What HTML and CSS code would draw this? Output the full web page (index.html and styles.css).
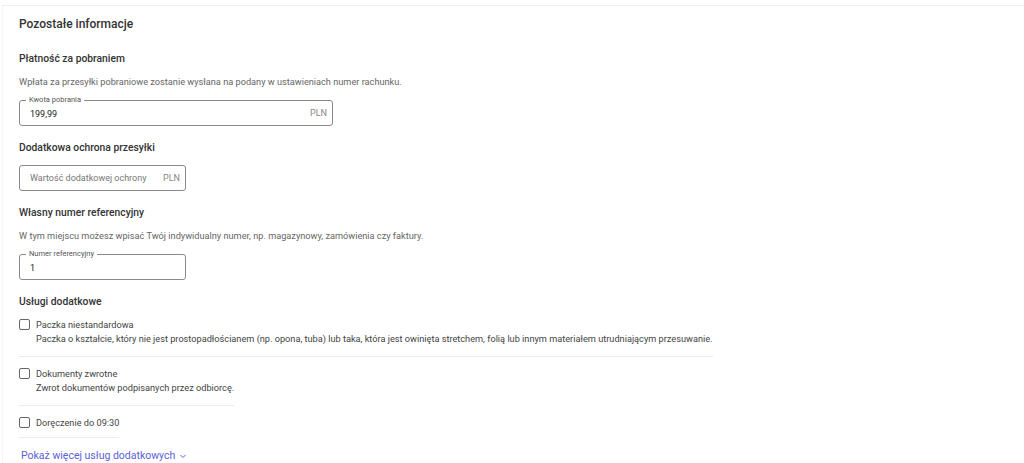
FILE: index.html
```html
<!DOCTYPE html>
<html lang="pl">
<head>
  <meta charset="UTF-8">
  <meta name="viewport" content="width=device-width, initial-scale=1.0">
  <title>Pozostałe informacje</title>
  <link rel="stylesheet" href="styles.css">
</head>
<body>
  <div class="card">
    <h2 class="card-title">Pozostałe informacje</h2>

    <section class="block">
      <h3>Płatność za pobraniem</h3>
      <p class="hint">Wpłata za przesyłki pobraniowe zostanie wysłana na podany w ustawieniach numer rachunku.</p>
      <label class="field field-wide">
        <span class="field-label">Kwota pobrania</span>
        <span class="field-value">199,99</span>
        <span class="field-unit">PLN</span>
      </label>
    </section>

    <section class="block">
      <h3>Dodatkowa ochrona przesyłki</h3>
      <label class="field field-narrow">
        <span class="field-placeholder">Wartość dodatkowej ochrony</span>
        <span class="field-unit">PLN</span>
      </label>
    </section>

    <section class="block">
      <h3>Własny numer referencyjny</h3>
      <p class="hint">W tym miejscu możesz wpisać Twój indywidualny numer, np. magazynowy, zamówienia czy faktury.</p>
      <label class="field field-narrow">
        <span class="field-label">Numer referencyjny</span>
        <span class="field-value">1</span>
      </label>
    </section>

    <section class="block services">
      <h3>Usługi dodatkowe</h3>
      <label class="service">
        <span class="checkbox"></span>
        <span class="service-text">
          <span class="service-name">Paczka niestandardowa</span>
          <span class="service-desc">Paczka o kształcie, który nie jest prostopadłościanem (np. opona, tuba) lub taka, która jest owinięta stretchem, folią lub innym materiałem utrudniającym przesuwanie.</span>
        </span>
      </label>
      <label class="service">
        <span class="checkbox"></span>
        <span class="service-text">
          <span class="service-name">Dokumenty zwrotne</span>
          <span class="service-desc">Zwrot dokumentów podpisanych przez odbiorcę.</span>
        </span>
      </label>
      <label class="service">
        <span class="checkbox"></span>
        <span class="service-text">
          <span class="service-name">Doręczenie do 09:30</span>
        </span>
      </label>
      <a class="more-link" href="#">Pokaż więcej usług dodatkowych
        <svg width="8" height="8" viewBox="0 0 8 8"><path d="M1.5 3 L4 5.5 L6.5 3" fill="none" stroke="currentColor" stroke-width="1"/></svg>
      </a>
    </section>
  </div>
</body>
</html>
```

FILE: styles.css
```css
* {
  margin: 0;
  padding: 0;
  box-sizing: border-box;
}

body {
  font-family: Roboto, 'Liberation Sans', Arial, sans-serif;
  background: #fff;
  color: #333;
  padding: 5px 0 0 2px;
}

.card {
  border-top: 1px solid #f0f0f0;
  border-left: 1px dotted #eceff3;
  padding: 10px 16px 0;
}

.card-title {
  font-size: 12px;
  font-weight: 500;
  color: #333;
  line-height: 16px;
  margin-bottom: 20px;
}

.block {
  display: flex;
  flex-direction: column;
  align-items: flex-start;
  margin-bottom: 15px;
}

.block h3 {
  font-size: 10.3px;
  font-weight: 500;
  color: #333;
  line-height: 14px;
  margin-bottom: 10px;
}

.hint {
  font-size: 9.2px;
  color: #666;
  line-height: 12px;
  margin-bottom: 12px;
}

.field {
  position: relative;
  display: flex;
  align-items: center;
  height: 26px;
  border: 1px solid #8a8a8a;
  border-radius: 3px;
  padding: 0 5px 0 10px;
  font-size: 9px;
  white-space: nowrap;
}

.field-wide {
  width: 314px;
}

.field-narrow {
  width: 167px;
}

.field-label {
  position: absolute;
  top: -6px;
  left: 6px;
  padding: 0 3px;
  background: #fff;
  font-size: 7.5px;
  line-height: 10px;
  color: #555;
}

.field-value {
  flex: 1;
  color: #222;
  padding-top: 2px;
}

.field-placeholder {
  flex: 1;
  color: #777;
}

.field-unit {
  color: #888;
  font-size: 9px;
}

.services h3 {
  margin-bottom: 3px;
}

.service {
  display: flex;
  gap: 6px;
  padding: 7px 0 11px;
  border-bottom: 1px solid #ececec;
  margin-bottom: 4px;
}

.service:last-of-type {
  padding-bottom: 8px;
}

.checkbox {
  width: 11px;
  height: 11px;
  border: 1px solid #666;
  border-radius: 2px;
  flex-shrink: 0;
}

.service-text {
  display: flex;
  flex-direction: column;
  gap: 2px;
}

.service-name {
  font-size: 9.2px;
  color: #444;
  line-height: 12px;
}

.service-desc {
  font-size: 9.2px;
  color: #444;
  line-height: 12px;
}

.more-link {
  display: flex;
  align-items: center;
  gap: 4px;
  margin-top: 7px;
  margin-left: 2px;
  font-size: 10.5px;
  line-height: 14px;
  color: #5b5fd6;
  text-decoration: none;
}
```
